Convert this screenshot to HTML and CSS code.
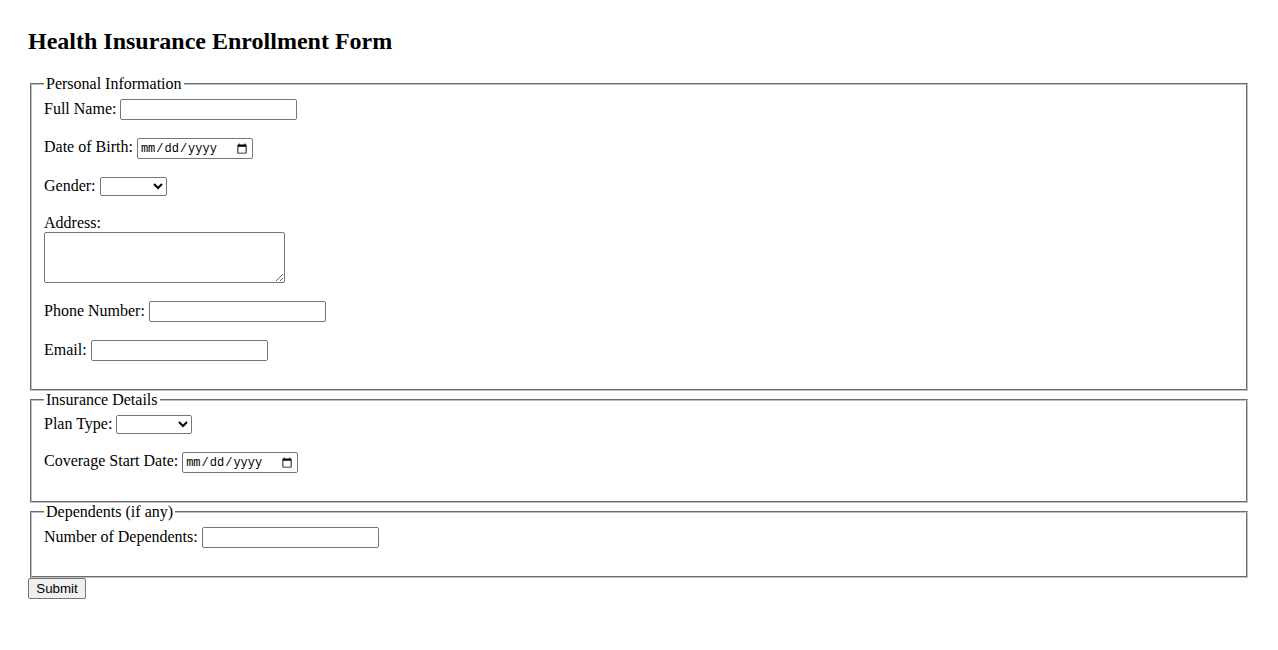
FILE: index.html
```html
<!DOCTYPE html>
<html>
<head>
<meta charset="utf-8">
<title>Health Insurance Enrollment Form</title>
<link rel="stylesheet" href="styles.css">
</head>
<body>
<h2 class="title">Health Insurance Enrollment Form</h2>
<form class="form">
<fieldset class="group">
<legend class="legend">Personal Information</legend>
<label class="lbl" for="name">Full Name:</label> <input class="txt" type="text" id="name"><br><br>
<label class="lbl" for="dob">Date of Birth:</label> <input class="date" type="date" id="dob"><br><br>
<label class="lbl" for="gender">Gender:</label> <select class="sel sel-gender" id="gender"><option value=""></option><option>Male</option><option>Female</option><option>Other</option></select><br><br>
<label class="lbl" for="addr">Address:</label><br>
<textarea class="area" id="addr"></textarea><br><br>
<label class="lbl" for="phone">Phone Number:</label> <input class="txt" type="tel" id="phone"><br><br>
<label class="lbl" for="email">Email:</label> <input class="txt" type="email" id="email"><br><br>
</fieldset>
<fieldset class="group">
<legend class="legend">Insurance Details</legend>
<label class="lbl" for="plan">Plan Type:</label> <select class="sel sel-plan" id="plan"><option value=""></option><option>Individual</option><option>Family</option></select><br><br>
<label class="lbl" for="start">Coverage Start Date:</label> <input class="date" type="date" id="start"><br><br>
</fieldset>
<fieldset class="group">
<legend class="legend">Dependents (if any)</legend>
<label class="lbl" for="deps">Number of Dependents:</label> <input class="txt" type="number" id="deps" min="0"><br><br>
</fieldset>
<button class="btn" type="submit">Submit</button>
</form>
</body>
</html>
```
FILE: styles.css
```css
html, body {
  background: #ffffff;
}
body {
  margin: 28px;
  font-family: "Liberation Serif", "Times New Roman", serif;
  font-size: 16px;
  color: #000;
}
.title {
  font-size: 24px;
  font-weight: bold;
  margin: 0 0 20px 0;
}
.form {
  margin: 0;
}
.group {
  margin: 0 2px;
  padding: 5.6px 12px 10px 12px;
  border: 2px groove rgb(192, 192, 192);
}
.legend {
  padding: 0 2px;
}
.txt, .date, .sel, .area, .btn {
  font-family: "Liberation Sans", Arial, sans-serif;
  font-size: 13.33px;
  box-sizing: border-box;
  vertical-align: baseline;
}
.txt {
  width: 177px;
  height: 21px;
  padding: 1px 2px;
  border: 1px solid #767676;
  border-radius: 2px;
}
.date {
  width: 116px;
  height: 21px;
  padding: 1px 2px;
  border: 1px solid #767676;
  border-radius: 2px;
  font-family: "Liberation Mono", "DejaVu Sans Mono", monospace;
  font-size: 12px;
}
.sel {
  height: 19px;
  border: 1px solid #767676;
  border-radius: 2px;
  background: #fff;
}
.sel-gender {
  width: 67px;
}
.sel-plan {
  width: 76px;
}
.area {
  width: 241px;
  height: 51px;
  border: 1px solid #767676;
  border-radius: 2px;
  vertical-align: top;
}
.btn {
  width: 58px;
  height: 21px;
  padding: 1px 6px;
  border: 1px solid #767676;
  border-radius: 2px;
  background: #efefef;
  color: #000;
}
```
